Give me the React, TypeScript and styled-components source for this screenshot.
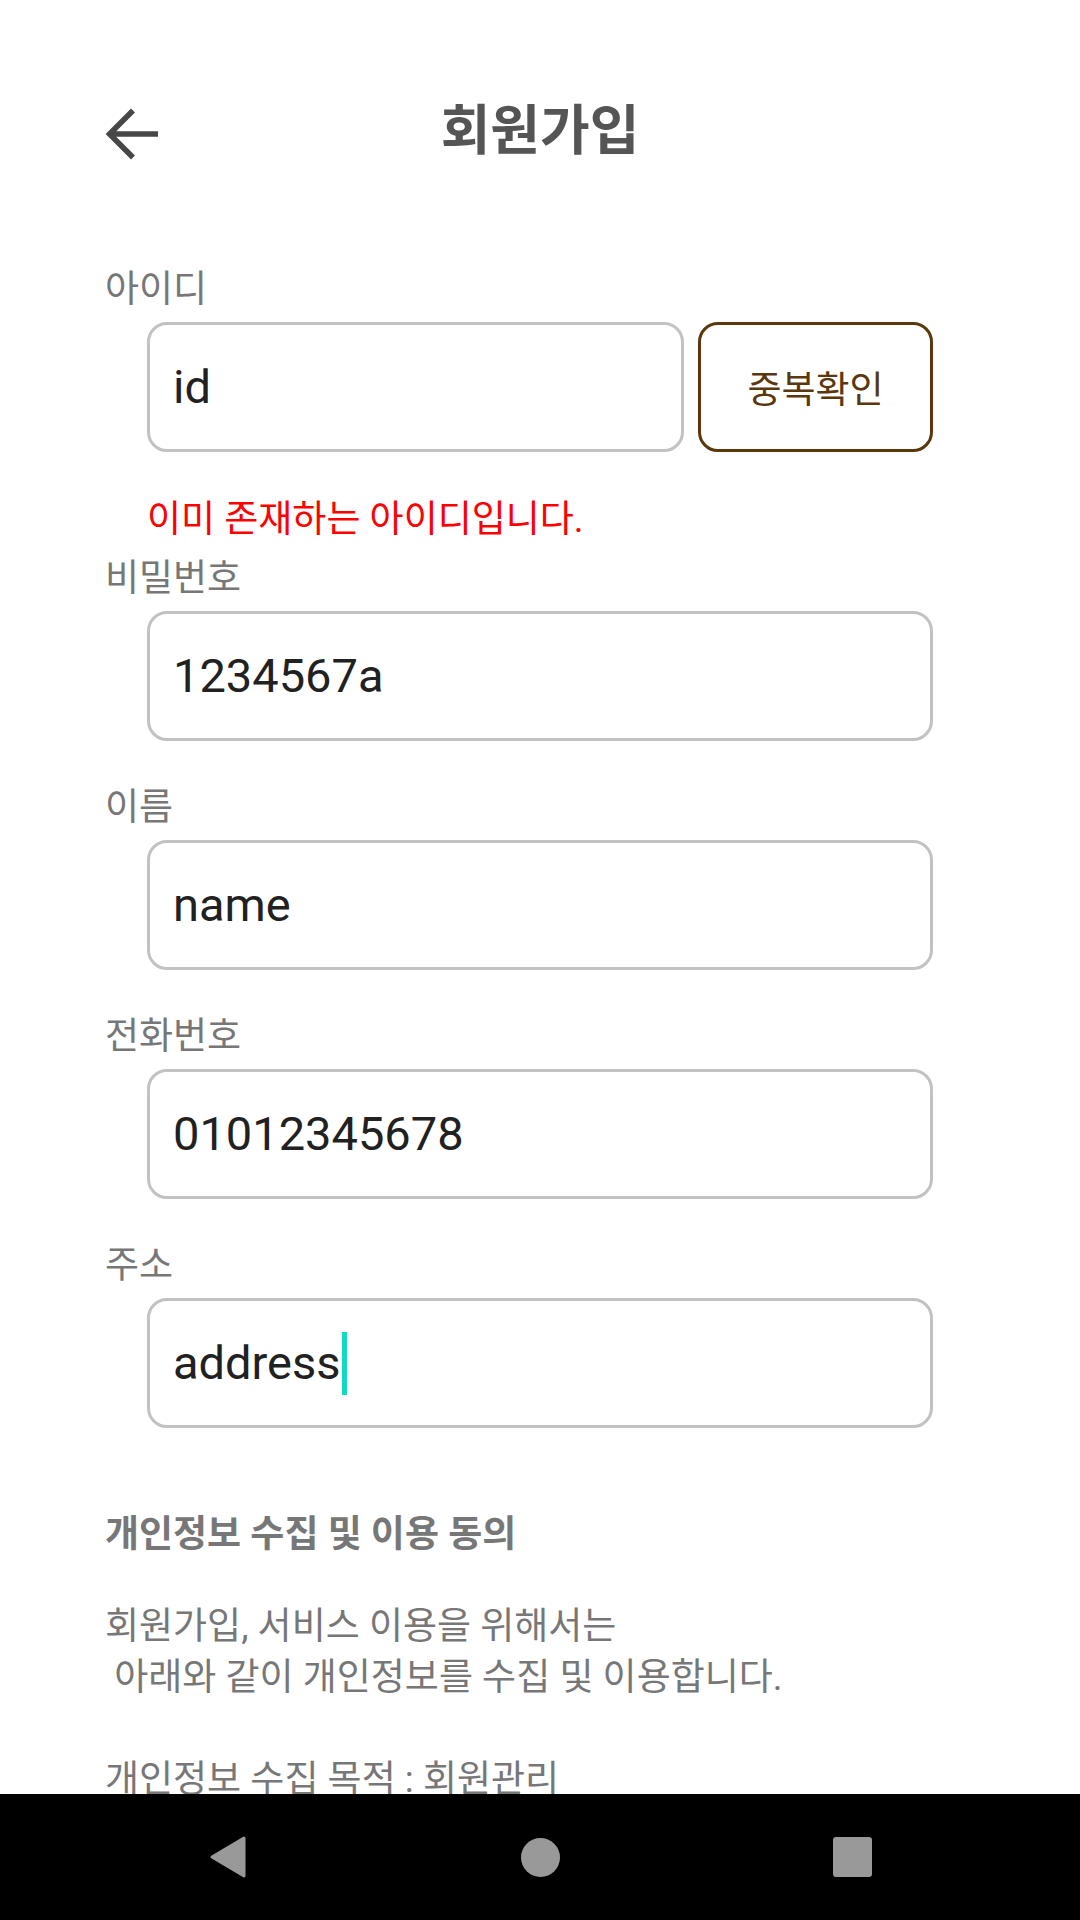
import React from "react";
import styled, { createGlobalStyle } from "styled-components";

const GlobalStyle = createGlobalStyle`
  html, body {
    margin: 0;
    padding: 0;
    background: #ffffff;
  }
  body {
    font-family: Roboto, "Noto Sans CJK KR", sans-serif;
  }
  * { box-sizing: border-box; }
`;

const Screen = styled.div`
  width: 1080px;
  height: 1920px;
  display: flex;
  flex-direction: column;
  background: #ffffff;
  overflow: hidden;
`;

const Content = styled.main`
  height: 1794px;
  overflow: hidden;
  display: flex;
  flex-direction: column;
`;

const Header = styled.header`
  margin-top: 92px;
  height: 80px;
  display: grid;
  grid-template-columns: 1fr auto 1fr;
  align-items: center;
`;

const BackButton = styled.button`
  justify-self: start;
  margin-left: 103px;
  width: 57px;
  height: 57px;
  padding: 0;
  border: none;
  background: transparent;
  display: flex;
  align-items: center;
  justify-content: center;
`;

const Title = styled.h1`
  margin: 0;
  font-family: Roboto, "Noto Sans CJK KR", sans-serif;
  font-size: 54px;
  line-height: 80px;
  font-weight: 700;
  color: #555555;
`;

const Form = styled.section`
  padding: 94px 147px 0 105px;
  display: flex;
  flex-direction: column;
`;

const Field = styled.div<{ $gap?: number }>`
  display: flex;
  flex-direction: column;
  margin-top: ${(p) => (p.$gap ?? 43)}px;
`;

const Label = styled.label`
  font-size: 37px;
  line-height: 48px;
  color: #777777;
  margin-bottom: 8px;
`;

const InputRow = styled.div`
  margin-left: 42px;
  display: flex;
  gap: 14px;
`;

const InputBox = styled.div`
  flex: 1;
  height: 130px;
  border: 3px solid #c2c2c2;
  border-radius: 20px;
  padding-left: 23px;
  display: flex;
  align-items: center;
  font-family: Roboto, "Noto Sans CJK KR", sans-serif;
  font-size: 47px;
  line-height: 64px;
  color: #212121;
  background: #ffffff;
`;

const Caret = styled.span`
  display: inline-block;
  width: 5px;
  height: 63px;
  margin-left: 1px;
  background: #12d9c4;
`;

const CheckButton = styled.button`
  width: 235px;
  height: 130px;
  border: 3px solid #5b370e;
  border-radius: 20px;
  background: #ffffff;
  color: #5b370e;
  font-family: Roboto, "Noto Sans CJK KR", sans-serif;
  font-size: 37px;
  padding: 0;
`;

const ErrorText = styled.p`
  margin: 44px 0 0 42px;
  font-size: 37px;
  line-height: 48px;
  color: #ff0000;
`;

const Privacy = styled.section`
  padding: 0 105px;
  margin-top: 81px;
  display: flex;
  flex-direction: column;
`;

const PrivacyTitle = styled.h2`
  margin: 0;
  font-size: 37px;
  line-height: 52px;
  font-weight: 700;
  color: #777777;
`;

const PrivacyBody = styled.p`
  margin: 40px 0 0 0;
  font-size: 37px;
  line-height: 51px;
  color: #777777;
  white-space: pre-wrap;
`;

const NavBar = styled.nav`
  height: 126px;
  background: #000000;
  display: flex;
  align-items: center;
  justify-content: center;
  gap: 272px;
`;

const NavIcon = styled.div`
  width: 40px;
  height: 42px;
  display: flex;
  align-items: center;
  justify-content: center;
`;

const HomeDot = styled.div`
  width: 39px;
  height: 39px;
  border-radius: 50%;
  background: #999999;
`;

const RecentSquare = styled.div`
  width: 39px;
  height: 40px;
  border-radius: 3px;
  background: #999999;
`;

type FieldDef = { label: string; value: string; focused?: boolean };

const fields: FieldDef[] = [
  { label: "비밀번호", value: "1234567a" },
  { label: "이름", value: "name" },
  { label: "전화번호", value: "01012345678" },
  { label: "주소", value: "address", focused: true },
];

export default function App() {
  return (
    <Screen>
      <GlobalStyle />
      <Content>
        <Header>
          <BackButton aria-label="뒤로">
            <svg width="55" height="55" viewBox="0 0 55 55">
              <path
                d="M54 29 H6 M29 5.5 L5.5 29 L29 52.5"
                fill="none"
                stroke="#474747"
                strokeWidth="5.5"
                strokeLinecap="butt"
                strokeLinejoin="miter"
              />
            </svg>
          </BackButton>
          <Title>회원가입</Title>
          <div />
        </Header>
        <Form>
          <Field $gap={0}>
            <Label>아이디</Label>
            <InputRow>
              <InputBox>id</InputBox>
              <CheckButton>중복확인</CheckButton>
            </InputRow>
          </Field>
          <ErrorText>이미 존재하는 아이디입니다.</ErrorText>
          {fields.map((f, i) => (
            <Field key={f.label} $gap={i === 0 ? 11 : 43}>
              <Label>{f.label}</Label>
              <InputRow>
                <InputBox>
                  {f.value}
                  {f.focused && <Caret />}
                </InputBox>
              </InputRow>
            </Field>
          ))}
        </Form>
        <Privacy>
          <PrivacyTitle>개인정보 수집 및 이용 동의</PrivacyTitle>
          <PrivacyBody>
            {"회원가입, 서비스 이용을 위해서는\n 아래와 같이 개인정보를 수집 및 이용합니다.\n\n개인정보 수집 목적 : 회원관리"}
          </PrivacyBody>
        </Privacy>
      </Content>
      <NavBar>
        <NavIcon>
          <svg width="40" height="44" viewBox="0 0 40 44">
            <path
              d="M36 3 L4 22 L36 41 Z"
              fill="#999999"
              stroke="#999999"
              strokeWidth="3"
              strokeLinejoin="round"
            />
          </svg>
        </NavIcon>
        <NavIcon>
          <HomeDot />
        </NavIcon>
        <NavIcon>
          <RecentSquare />
        </NavIcon>
      </NavBar>
    </Screen>
  );
}
